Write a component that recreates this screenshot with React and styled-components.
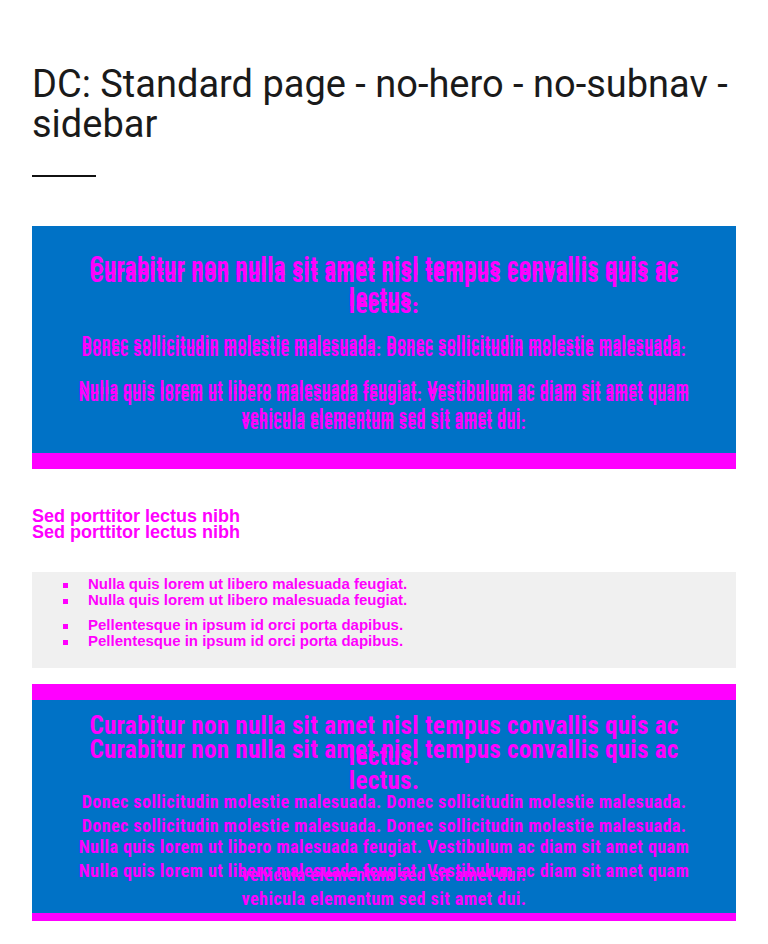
import React from 'react';
import styled, { createGlobalStyle } from 'styled-components';

const magenta = '#ff00ff';
const blue = '#0072c6';

const GlobalStyle = createGlobalStyle`
  html, body {
    margin: 0;
    padding: 0;
    background: #fff;
  }
  body {
    font-family: Roboto, 'Liberation Sans', sans-serif;
    color: #1a1a1a;
  }
`;

const Page = styled.main`
  padding: 64px 32px 0;
`;

const Title = styled.h1`
  margin: 0;
  font-family: Roboto, 'Liberation Sans', sans-serif;
  font-weight: 400;
  font-size: 38px;
  line-height: 40px;
  letter-spacing: 0;
  color: #1a1a1a;
`;

const Rule = styled.hr`
  width: 64px;
  height: 2px;
  border: 0;
  margin: 31px 0 49px;
  background: #111;
`;

const Banner = styled.section`
  background: ${blue};
  border-top: ${({ $top }) => $top}px solid ${magenta};
  border-bottom: ${({ $bottom }) => $bottom}px solid ${magenta};
  padding: ${({ $padTop }) => $padTop}px 40px ${({ $padBottom }) => $padBottom}px;
  text-align: center;
  font-family: 'Roboto Condensed', 'Liberation Sans Narrow', 'DejaVu Sans Condensed', sans-serif;
  color: ${magenta};
`;

const BannerHeading = styled.h2`
  margin: 0 auto;
  max-width: 624px;
  font-size: 25px;
  line-height: 31px;
  letter-spacing: 0.3px;
  font-weight: 700;
  text-shadow: 0 ${({ $shift }) => $shift}px 0 ${magenta};
`;

const BannerText = styled.p`
  margin: ${({ $gap }) => $gap}px auto 0;
  max-width: 624px;
  font-size: 18px;
  line-height: 28px;
  letter-spacing: 0.45px;
  font-weight: 700;
  text-shadow: 0 ${({ $shift }) => $shift}px 0 ${magenta};
`;

const SideHeading = styled.h3`
  margin: 38px 0 47px;
  font-family: 'Liberation Sans', Arial, sans-serif;
  font-weight: 700;
  font-size: 18px;
  line-height: 18px;
  color: ${magenta};
  text-shadow: 0 16px 0 ${magenta};
`;

const LinkBox = styled.ul`
  margin: 0 0 16px;
  padding: 3px 0 34px 56px;
  background: #f0f0f0;
  list-style: none;
  font-family: 'Liberation Sans', Arial, sans-serif;
  font-weight: 700;
  font-size: 15px;
  color: ${magenta};
`;

const LinkItem = styled.li`
  position: relative;
  line-height: 18px;
  margin-bottom: 23px;
  text-shadow: 0 16px 0 ${magenta};

  &:last-child {
    margin-bottom: 0;
  }

  &::before,
  &::after {
    content: '';
    position: absolute;
    left: -25px;
    width: 5px;
    height: 5px;
    background: ${magenta};
  }
  &::before {
    top: 8px;
  }
  &::after {
    top: 24px;
  }
`;

const promo = {
  heading: 'Curabitur non nulla sit amet nisl tempus convallis quis ac lectus.',
  first: 'Donec sollicitudin molestie malesuada. Donec sollicitudin molestie malesuada.',
  second: 'Nulla quis lorem ut libero malesuada feugiat. Vestibulum ac diam sit amet quam vehicula elementum sed sit amet dui.',
};

const links = [
  'Nulla quis lorem ut libero malesuada feugiat.',
  'Pellentesque in ipsum id orci porta dapibus.',
];

const Promo = ({ shift, top, bottom, padTop, padBottom }) => (
  <Banner $top={top} $bottom={bottom} $padTop={padTop} $padBottom={padBottom}>
    <BannerHeading $shift={shift}>{promo.heading}</BannerHeading>
    <BannerText $shift={shift} $gap={16}>{promo.first}</BannerText>
    <BannerText $shift={shift} $gap={17}>{promo.second}</BannerText>
  </Banner>
);

export default function App() {
  return (
    <>
      <GlobalStyle />
      <Page>
        <Title>DC: Standard page - no-hero - no-subnav - sidebar</Title>
        <Rule />
        <Promo shift={7} top={0} bottom={16} padTop={25} padBottom={23} />
        <SideHeading>Sed porttitor lectus nibh</SideHeading>
        <LinkBox>
          {links.map(text => (
            <LinkItem key={text}>{text}</LinkItem>
          ))}
        </LinkBox>
        <Promo shift={24} top={16} bottom={8} padTop={10} padBottom={24} />
      </Page>
    </>
  );
}
